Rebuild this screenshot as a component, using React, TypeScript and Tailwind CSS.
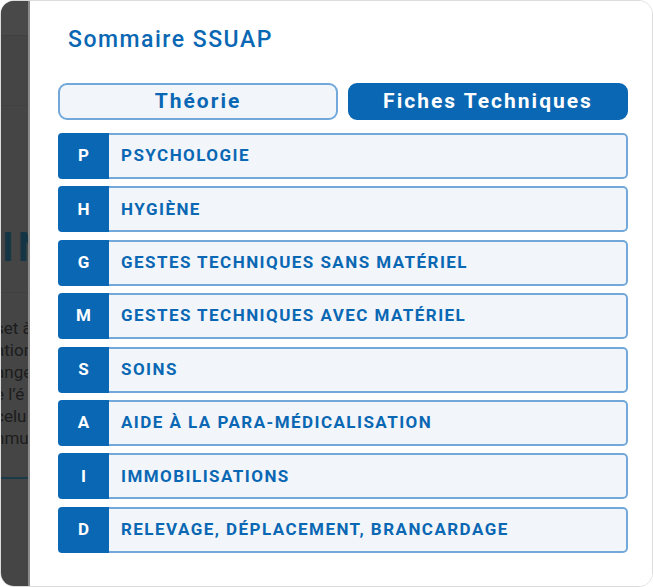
import React, { useState } from 'react';

const SECTIONS = [
  { letter: 'P', label: 'PSYCHOLOGIE' },
  { letter: 'H', label: 'HYGIÈNE' },
  { letter: 'G', label: 'GESTES TECHNIQUES SANS MATÉRIEL' },
  { letter: 'M', label: 'GESTES TECHNIQUES AVEC MATÉRIEL' },
  { letter: 'S', label: 'SOINS' },
  { letter: 'A', label: 'AIDE À LA PARA-MÉDICALISATION' },
  { letter: 'I', label: 'IMMOBILISATIONS' },
  { letter: 'D', label: 'RELEVAGE, DÉPLACEMENT, BRANCARDAGE' },
];

const BACKDROP_LINES = ['set à', 'ation', 'anger', 'e l’é', 'celu', 'nmu'];

// dimmed page visible behind the drawer
const Backdrop: React.FC = () => (
  <div className="w-[29px] shrink-0 bg-[#454545] border-r-2 border-[#8b8b8b] overflow-hidden flex flex-col">
    <div className="h-[35px] bg-[#494949] border-b border-[#404040]" />
    <div className="h-[70px] border-b border-[#414141]" />
    <div className="mt-[122px] flex whitespace-nowrap text-[40px] leading-[40px] font-bold text-[#143543]">
      <span className="ml-[1px]">I</span>
      <span className="ml-[4px]">N</span>
    </div>
    <div className="mt-[24px] border-b border-[#404040]" />
    <div className="mt-[24px] ml-[-6px] flex flex-col whitespace-nowrap text-[17px] leading-[22px] text-[#1c1c1c]">
      {BACKDROP_LINES.map((l) => (
        <span key={l}>{l}</span>
      ))}
    </div>
    <div className="mt-[28px] border-b-2 border-[#1b3a4a]" />
  </div>
);

const App: React.FC = () => {
  const [tab, setTab] = useState<'theorie' | 'fiches'>('fiches');

  const tabClass = (active: boolean) =>
    `h-[37px] rounded-[9px] border-2 text-[21px] font-bold tracking-[2px] flex items-center justify-center ${
      active ? 'bg-[#0a67b3] border-[#0a67b3] text-white' : 'bg-[#f2f6fa] border-[#72a9da] text-[#0a67b3]'
    }`;

  return (
    <div className="w-[653px] h-[587px] bg-white" style={{ fontFamily: 'Roboto, "Noto Sans", sans-serif' }}>
      <div className="w-[653px] h-[587px] rounded-[14px] border border-[#dcdcdc] overflow-hidden flex">
        <Backdrop />

        <div className="flex-1 bg-white pl-[28px] pr-[24px] pt-[25px] flex flex-col">
          <h1 className="ml-[10px] text-[23px] leading-[27px] font-medium tracking-[1.5px] text-[#0a67b3]">
            Sommaire SSUAP
          </h1>

          {/* Tabs */}
          <div className="mt-[30px] grid grid-cols-2 gap-[10px]">
            <button onClick={() => setTab('theorie')} className={tabClass(tab === 'theorie')}>
              Théorie
            </button>
            <button onClick={() => setTab('fiches')} className={tabClass(tab === 'fiches')}>
              Fiches Techniques
            </button>
          </div>

          {/* Sections */}
          <div className="mt-[13px] flex flex-col gap-[7.4px]">
            {SECTIONS.map((s) => (
              <div key={s.letter} className="h-[46px] flex rounded-[4px] overflow-hidden">
                <div className="w-[51px] shrink-0 bg-[#0a67b3] flex items-center justify-center text-white text-[17px] font-bold">
                  {s.letter}
                </div>
                <div className="flex-1 flex items-center pl-[12px] bg-[#f2f6fa] border-2 border-l-0 border-[#72a9da] rounded-r-[5px] text-[17px] font-bold tracking-[1.45px] text-[#0a67b3]">
                  {s.label}
                </div>
              </div>
            ))}
          </div>
        </div>
      </div>
    </div>
  );
};

export default App;
